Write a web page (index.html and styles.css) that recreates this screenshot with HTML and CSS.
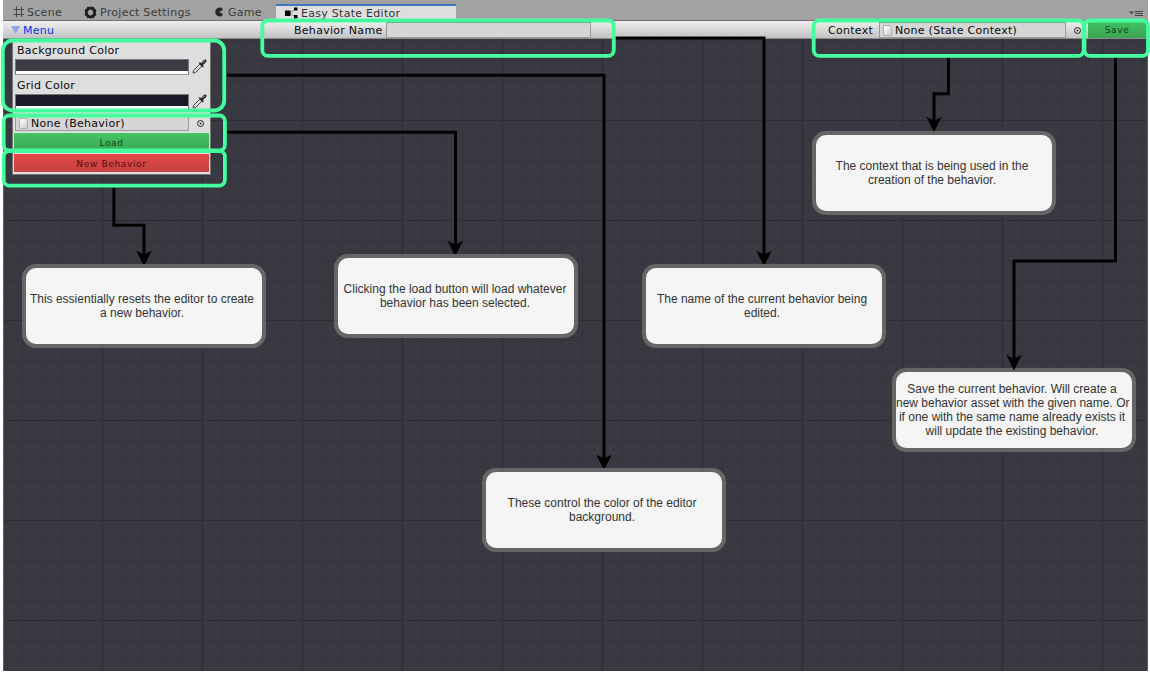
FILE: index.html
```html
<!DOCTYPE html>
<html lang="en">
<head>
<meta charset="utf-8">
<title>Easy State Editor</title>
<link rel="stylesheet" href="styles.css">
</head>
<body>
<main class="editor">
  <nav class="tabs">
    <div class="tab tab-scene">
      <svg class="icon" width="12" height="12" viewBox="0 0 12 12" fill="none" stroke="#484848" stroke-width="1"><path d="M3.5 0.5V11M8.5 0.5V11M0.5 3.5H11M0.5 8.5H11"/></svg>
      <span>Scene</span>
    </div>
    <div class="tab tab-project">
      <svg class="icon" width="13" height="13" viewBox="0 0 13 13"><path fill="#202020" fill-rule="evenodd" d="M3.5 .7 5 1.1 6.5 .4 8 1.1 9.7.7 10.5 2.6 12.4 4 11.8 6.5 12.4 9 10.5 10.4 9.7 12.3 8 11.9 6.5 12.6 5 11.9 3.3 12.3 2.5 10.4.6 9 1.2 6.5.6 4 2.5 2.6ZM6.5 3.3 3.9 4.9V8.1L6.5 9.8 9.1 8.1V4.9Z"/></svg>
      <span>Project Settings</span>
    </div>
    <div class="tab tab-game">
      <svg class="icon" width="10" height="10" viewBox="0 0 10 10"><path fill="#252525" d="M8.6 1.8A4.4 4.4 0 1 0 8.6 8.2L8.6 6.8 5 5 8.6 3.2Z"/></svg>
      <span>Game</span>
    </div>
    <div class="tab tab-active">
      <svg class="icon" width="15" height="12" viewBox="0 0 15 12"><path fill="none" stroke="#888" d="M6 6 11 2M6 6 11 10"/><path fill="#000" d="M1 3.5h5.5V9H1zM10 .5h3.5v3H10zM10 8h3.5v3.5H10z"/></svg>
      <span>Easy State Editor</span>
    </div>
    <svg class="pane-menu" width="14" height="7" viewBox="0 0 14 7"><path fill="#444" d="M0 1.5H5L2.5 4.2ZM6 1h8v1H6zM6 3h8v1H6zM6 5h8v1H6z"/></svg>
  </nav>
  <header class="toolbar">
    <div class="menu">
      <svg width="9" height="8" viewBox="0 0 9 8"><path fill="#94a4ec" d="M0 0H9L4.5 8Z"/></svg>
      <span>Menu</span>
    </div>
    <div class="name-group">
      <span>Behavior Name</span>
      <div class="field name-field"></div>
    </div>
    <div class="context-group">
      <span>Context</span>
      <div class="field context-field"><i class="doc"></i><span>None (State Context)</span></div>
      <i class="picker"></i>
    </div>
    <div class="button save">Save</div>
  </header>
  <section class="canvas">
    <aside class="panel">
      <span class="label">Background Color</span>
      <div class="color-row">
        <div class="swatch swatch-bg"></div>
        <svg class="dropper" width="15" height="15" viewBox="0 0 15 15"><path fill="#ddd" stroke="#444" d="M1 14 1.6 11.4 7.8 5.2 9.8 7.2 3.6 13.4Z"/><path fill="#222" d="M6.6 3.8 8 3.2 9.2 4.2 11.2 1.4Q13-.2 14.3 1 15 2.6 13.2 4L10.9 5.9 11.8 7.2 10.8 8.4Z"/><path stroke="#aaa" d="M10.5 4 13 1.8"/></svg>
      </div>
      <span class="label">Grid Color</span>
      <div class="color-row">
        <div class="swatch swatch-grid"></div>
        <svg class="dropper" width="15" height="15" viewBox="0 0 15 15"><path fill="#ddd" stroke="#444" d="M1 14 1.6 11.4 7.8 5.2 9.8 7.2 3.6 13.4Z"/><path fill="#222" d="M6.6 3.8 8 3.2 9.2 4.2 11.2 1.4Q13-.2 14.3 1 15 2.6 13.2 4L10.9 5.9 11.8 7.2 10.8 8.4Z"/><path stroke="#aaa" d="M10.5 4 13 1.8"/></svg>
      </div>
      <div class="object-row">
        <div class="field"><i class="doc"></i><span>None (Behavior)</span></div>
        <i class="picker"></i>
      </div>
      <div class="button load">Load</div>
      <div class="button new">New Behavior</div>
    </aside>
  </section>
</main>

<svg class="overlay" width="1150" height="673" viewBox="0 0 1150 673">
  <defs><path id="head" d="M-7.7-14.3 0-10.5 7.7-14.3 0 1.2Z"/></defs>
  <g fill="none" stroke="#000" stroke-width="3">
    <path d="M113.9 188V225.2H144V257"/>
    <path d="M227 132.2H455.5V247"/>
    <path d="M227 75.2H604V461"/>
    <path d="M615 38H764V257"/>
    <path d="M948.4 58V93.8H934V124"/>
    <path d="M1115.5 58V261H1014V361"/>
  </g>
  <use href="#head" x="144" y="265"/>
  <use href="#head" x="455.3" y="255"/>
  <use href="#head" x="604" y="469"/>
  <use href="#head" x="764" y="265"/>
  <use href="#head" x="934" y="131"/>
  <g class="frames">
    <rect x="2.8" y="40.5" width="221.4" height="70" rx="10"/>
    <rect x="3.7" y="115.5" width="221.2" height="35" rx="5.5"/>
    <rect x="3.7" y="151" width="221.2" height="34.6" rx="5.5"/>
    <rect x="262.3" y="20.5" width="351.5" height="35.3" rx="5.5"/>
    <rect x="813.7" y="20.5" width="270" height="35.3" rx="5.5"/>
    <rect x="1084.5" y="20.5" width="63.5" height="35.3" rx="5.5"/>
  </g>
</svg>
<div class="note note-new">This essientially resets the editor to create<br>a new behavior.</div>
<div class="note note-load">Clicking the load button will load whatever<br>behavior has been selected.</div>
<div class="note note-name">The name of the current behavior being<br>edited.</div>
<div class="note note-context">The context that is being used in the<br>creation of the behavior.</div>
<div class="note note-save">Save the current behavior. Will create a<br>new behavior asset with the given name. Or<br>if one with the same name already exists it<br>will update the existing behavior.</div>
<div class="note note-color">These control the color of the editor<br>background.</div>
<svg class="overlay" width="1150" height="673" viewBox="0 0 1150 673"><path d="M1006.3 355 1014 358.8 1021.7 355 1014 370.5Z"/></svg>
</body>
</html>
```
FILE: styles.css
```css
* { box-sizing: border-box; }
body {
  margin: 0;
  width: 1150px;
  height: 673px;
  position: relative;
  overflow: hidden;
  background: #fff;
  font: 11px/14px "DejaVu Sans", sans-serif;
  letter-spacing: 0.28px;
  color: #0a0a0a;
  white-space: nowrap;
}
.editor {
  display: flex;
  flex-direction: column;
  width: 1145px;
  height: 671px;
  margin-left: 3px;
}
.tabs {
  display: flex;
  align-items: flex-end;
  height: 21px;
  background: #a2a2a2;
  border-bottom: 1px solid #707070;
  color: #3c3c3c;
}
.tab { display: flex; align-items: center; height: 16px; gap: 2px; }
.tab span { padding-top: 2px; }
.icon { flex: none; }
.tab-scene { padding-left: 10px; width: 81px; }
.tab-project { width: 129px; gap: 3px; }
.tab-game { width: 63px; gap: 4px; padding-left: 1px; }
.tab-active {
  width: 180px;
  padding-left: 8px;
  background: #dedede;
  border-top: 2px solid #3e76c0;
  color: #333;
}
.tab-active span { padding-top: 1px; }
.pane-menu { margin: 0 5px 3px auto; }
.toolbar {
  display: flex;
  height: 18px;
  background: linear-gradient(#f0f0f0, #c2c2c2);
  border-bottom: 1px solid #8c8c8c;
}
.menu {
  display: flex;
  align-items: center;
  gap: 3px;
  width: 291px;
  padding-left: 8px;
  color: #0a32e6;
}
.menu span { padding-top: 2px; }
.name-group { display: flex; align-items: center; width: 534px; }
.name-group > span { width: 92px; padding-top: 2px; }
.field {
  display: flex;
  align-items: center;
  gap: 3px;
  height: 16px;
  padding-left: 3px;
  background: #d6d6d6;
  border: 1px solid #999;
  border-top: 1px solid #6e6e6e;
}
.field span { padding-top: 2px; }
.name-field { width: 205px; margin-top: 1px; }
.context-group { display: flex; align-items: center; width: 260px; padding-top: 1px; }
.context-group > span { width: 51px; padding-top: 2px; }
.context-field { width: 187px; }
.doc {
  flex: none;
  width: 9px;
  height: 11px;
  background: linear-gradient(135deg, #fdfdfd, #cdd2d6);
  border: 1px solid #aeb1b4;
  border-top-right-radius: 3px;
}
.picker {
  flex: none;
  width: 7px;
  height: 7px;
  border: 1px solid #222;
  border-radius: 50%;
  background: radial-gradient(circle, #111 0.8px, transparent 1.1px);
}
.context-group .picker { margin-left: 8px; }
.button {
  display: flex;
  align-items: center;
  justify-content: center;
  font-size: 9px;
  letter-spacing: 0.65px;
}
.save {
  flex: 1;
  height: 17px;
  padding: 1px 2px 0 0;
  color: #14401f;
  background: linear-gradient(#42c062, #3ba552);
}
.canvas {
  flex: 1;
  background:
    linear-gradient(90deg, #2c2c37 1px, transparent 1px) 98px 0 / 100px 100px,
    linear-gradient(#2c2c37 1px, transparent 1px) 0 81px / 100px 100px,
    linear-gradient(90deg, #33333d 1px, transparent 1px) 18px 0 / 20px 20px,
    linear-gradient(#33333d 1px, transparent 1px) 0 1px / 20px 20px,
    #393941;
  border-left: 1px solid #5a5a60;
  border-right: 1px solid #5a5a60;
}
.panel {
  display: flex;
  flex-direction: column;
  width: 199px;
  height: 136px;
  margin-left: 8px;
  padding: 4px 1px 0 2px;
  background: #dedede;
  border: 1px solid #777;
  border-top: 0;
}
.label { height: 14px; padding-left: 2px; line-height: 16px; }
.color-row { display: flex; gap: 3px; height: 21px; padding-top: 2px; }
.swatch {
  width: 174px;
  height: 16px;
  border: 1px solid #777;
  border-bottom-color: #999;
}
.swatch-bg { background: linear-gradient(#3b3b44 11px, #fff 11px); }
.swatch-grid { background: linear-gradient(#191928 11px, #fff 11px); }
.object-row {
  display: flex;
  align-items: center;
  gap: 8px;
  height: 19px;
  padding-top: 1px;
}
.object-row .field { width: 174px; }
.load, .new { margin-left: -1px; width: 195px; flex: none; }
.load { height: 18px; margin-top: 1px; padding-top: 1px; color: #14401f; background: linear-gradient(#42c464, #3ba855); }
.new { height: 18px; margin-top: 3px; padding-top: 1px; color: #501010; background: linear-gradient(#e24646, #c64343); }
.overlay { position: absolute; left: 0; top: 0; pointer-events: none; }
.frames { fill: none; stroke: #44ff9e; stroke-width: 3.8; }
.note {
  position: absolute;
  display: flow-root;
  width: 244px;
  height: 84px;
  padding: 24px 4px 0 0;
  background: #f5f5f5;
  border: 4px solid #666;
  border-radius: 14px;
  color: #333;
  font: 12px/14px "Liberation Sans", Arial, sans-serif;
  letter-spacing: 0;
  text-align: center;
}
.note-new { left: 22px; top: 264px; }
.note-load { left: 334px; top: 254px; padding-right: 2px; }
.note-name { left: 642px; top: 264px; }
.note-context { left: 812px; top: 131px; }
.note-save { left: 892px; top: 368px; padding-top: 10px; }
.note-color { left: 482px; top: 468px; }
```
